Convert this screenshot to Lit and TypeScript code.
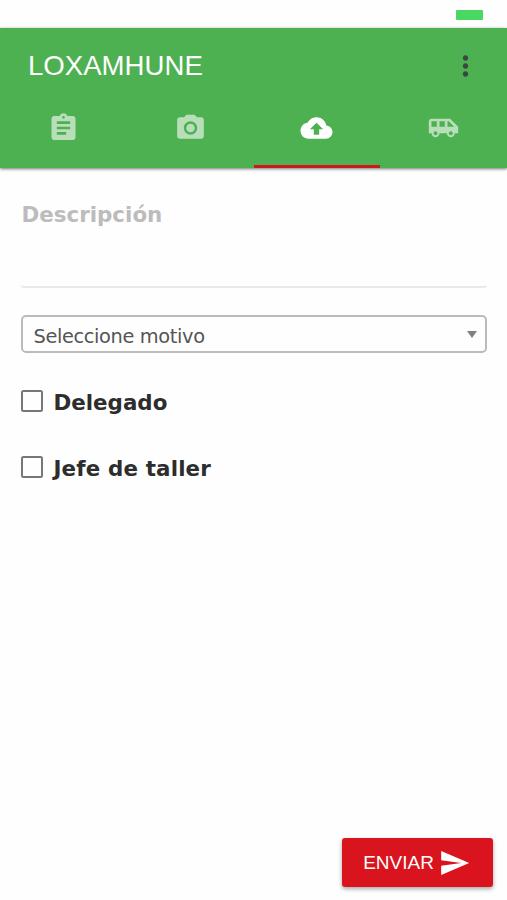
import { LitElement, html, css, svg } from "lit";
import { customElement, state } from "lit/decorators.js";

const ICONS: Record<string, string> = {
  assignment:
    "M19 3h-4.18C14.4 1.84 13.3 1 12 1c-1.3 0-2.4.84-2.82 2H5c-1.1 0-2 .9-2 2v14c0 1.1.9 2 2 2h14c1.1 0 2-.9 2-2V5c0-1.1-.9-2-2-2zm-7 0c.55 0 1 .45 1 1s-.45 1-1 1-1-.45-1-1 .45-1 1-1zm2 14H7v-2h7v2zm3-4H7v-2h10v2zm0-4H7V7h10v2z",
  camera:
    "M12 8.8a3.2 3.2 0 1 0 0 6.4 3.2 3.2 0 0 0 0-6.4zM9 2L7.17 4H4c-1.1 0-2 .9-2 2v12c0 1.1.9 2 2 2h16c1.1 0 2-.9 2-2V6c0-1.1-.9-2-2-2h-3.17L15 2H9zm3 15c-2.76 0-5-2.24-5-5s2.24-5 5-5 5 2.24 5 5-2.24 5-5 5z",
  upload:
    "M19.35 10.04C18.67 6.59 15.64 4 12 4 9.11 4 6.6 5.64 5.35 8.04 2.34 8.36 0 10.91 0 14c0 3.31 2.69 6 6 6h13c2.76 0 5-2.24 5-5 0-2.64-2.05-4.78-4.65-4.96zM14 13v4h-4v-4H7l5-5 5 5h-3z",
  shuttle:
    "M17 5H3c-1.1 0-2 .89-2 2v9h2c0 1.65 1.34 3 3 3s3-1.34 3-3h5.5c0 1.65 1.34 3 3 3s3-1.34 3-3H23v-5l-6-6zM3 11V7h4v4H3zm3 6.5c-.83 0-1.5-.67-1.5-1.5s.67-1.5 1.5-1.5 1.5.67 1.5 1.5-.67 1.5-1.5 1.5zm7-6.5H9V7h4v4zm4.5 6.5c-.83 0-1.5-.67-1.5-1.5s.67-1.5 1.5-1.5 1.5.67 1.5 1.5-.67 1.5-1.5 1.5zM15 11V7h1l4 4h-5z",
  more: "M12 8c1.1 0 2-.9 2-2s-.9-2-2-2-2 .9-2 2 .9 2 2 2zm0 2c-1.1 0-2 .9-2 2s.9 2 2 2 2-.9 2-2-.9-2-2-2zm0 6c-1.1 0-2 .9-2 2s.9 2 2 2 2-.9 2-2-.9-2-2-2z",
  send: "M2.01 21L23 12 2.01 3 2 10l15 2-15 2z",
};

const icon = (name: string) =>
  html`<svg class="icon" viewBox="0 0 24 24">${svg`<path d=${ICONS[name]} />`}</svg>`;

@customElement("app-root")
export class AppRoot extends LitElement {
  @state() private tab = "upload";
  @state() private checked: string[] = [];

  static styles = css`
    :host {
      display: flex;
      flex-direction: column;
      height: 900px;
      background: #fefefe;
      font-family: "DejaVu Sans", Verdana, sans-serif;
      overflow: hidden;
    }
    * { box-sizing: border-box; }
    .icon { display: block; width: 33px; height: 32px; fill: currentColor; overflow: visible; }
    .status {
      height: 28px;
      flex: none;
      display: flex;
      justify-content: flex-end;
      padding: 10px 24px 0 0;
    }
    .battery { width: 27px; height: 10px; border-radius: 1px; background: #49d862; }
    header {
      flex: none;
      height: 140px;
      display: flex;
      flex-direction: column;
      background: #4db051;
      box-shadow: 0 1px 3px rgba(0, 0, 0, 0.55);
    }
    .bar {
      height: 76px;
      display: flex;
      align-items: center;
      justify-content: space-between;
      padding: 0 25.5px 0 28px;
    }
    h1 {
      margin: 0;
      font: 400 27.6px/32px "Liberation Sans", Arial, sans-serif;
      color: #fff;
    }
    .more { color: #3d4540; }
    nav { flex: 1; display: grid; grid-template-columns: repeat(4, 1fr); }
    .tab {
      display: flex;
      justify-content: center;
      padding-top: 8px;
      color: #b8dfb9;
      border-bottom: 3px solid transparent;
    }
    .tab.active { color: #fff; border-bottom-color: #c91a1c; }
    main { flex: 1; display: flex; flex-direction: column; padding: 33px 20px 0 21px; }
    .description {
      height: 87px;
      padding-left: 0.5px;
      border-bottom: 2px solid #e9e9e9;
      border-radius: 3px;
      color: #bcbcbc;
      font-weight: 700;
      font-size: 21.4px;
      line-height: 28px;
    }
    .select {
      margin-top: 27px;
      height: 38px;
      flex: none;
      display: flex;
      align-items: center;
      justify-content: space-between;
      padding: 6px 8px 0 10.5px;
      border: 2px solid #bbb;
      border-radius: 5px;
      color: #555;
      font-size: 19.4px;
      line-height: 24px;
      letter-spacing: -0.38px;
    }
    .caret {
      margin-top: -6px;
      border: 5.5px solid transparent;
      border-top: 7px solid #808080;
      border-bottom: 0;
    }
    .check {
      display: flex;
      align-items: center;
      gap: 10.5px;
      height: 28px;
      margin-top: 35px;
      color: #2d2d2d;
      font-weight: 700;
      font-size: 21.4px;
      line-height: 28px;
    }
    .check + .check { margin-top: 38px; letter-spacing: 0.15px; }
    .label { padding-top: 2px; }
    .box { width: 22px; height: 22px; margin-top: -2px; border: 2.5px solid #777; border-radius: 2.5px; }
    .box.on { background: #777; }
    footer { flex: none; display: flex; justify-content: flex-end; padding: 0 14px 13.5px 0; }
    .send {
      display: flex;
      align-items: center;
      justify-content: center;
      gap: 4px;
      width: 151px;
      height: 48.5px;
      padding: 2px 1px 0 0;
      border: 0;
      border-radius: 3px;
      background: #d9141e;
      color: #fff;
      font: 400 19px/24px "Liberation Sans", Arial, sans-serif;
      box-shadow: 0 2px 4px rgba(0, 0, 0, 0.35);
    }
  `;

  private toggle(name: string) {
    this.checked = this.checked.includes(name)
      ? this.checked.filter((n) => n !== name)
      : [...this.checked, name];
  }

  render() {
    return html`
      <div class="status"><span class="battery"></span></div>
      <header>
        <div class="bar">
          <h1>LOXAMHUNE</h1>
          <span class="more">${icon("more")}</span>
        </div>
        <nav>
          ${["assignment", "camera", "upload", "shuttle"].map(
            (name) => html`<div
              class="tab ${this.tab === name ? "active" : ""}"
              @click=${() => (this.tab = name)}
            >${icon(name)}</div>`
          )}
        </nav>
      </header>
      <main>
        <div class="description">Descripción</div>
        <div class="select"><span>Seleccione motivo</span><span class="caret"></span></div>
        ${["Delegado", "Jefe de taller"].map(
          (name) => html`<div class="check" @click=${() => this.toggle(name)}>
            <span class="box ${this.checked.includes(name) ? "on" : ""}"></span>
            <span class="label">${name}</span>
          </div>`
        )}
      </main>
      <footer><button class="send"><span>ENVIAR</span>${icon("send")}</button></footer>
    `;
  }
}
